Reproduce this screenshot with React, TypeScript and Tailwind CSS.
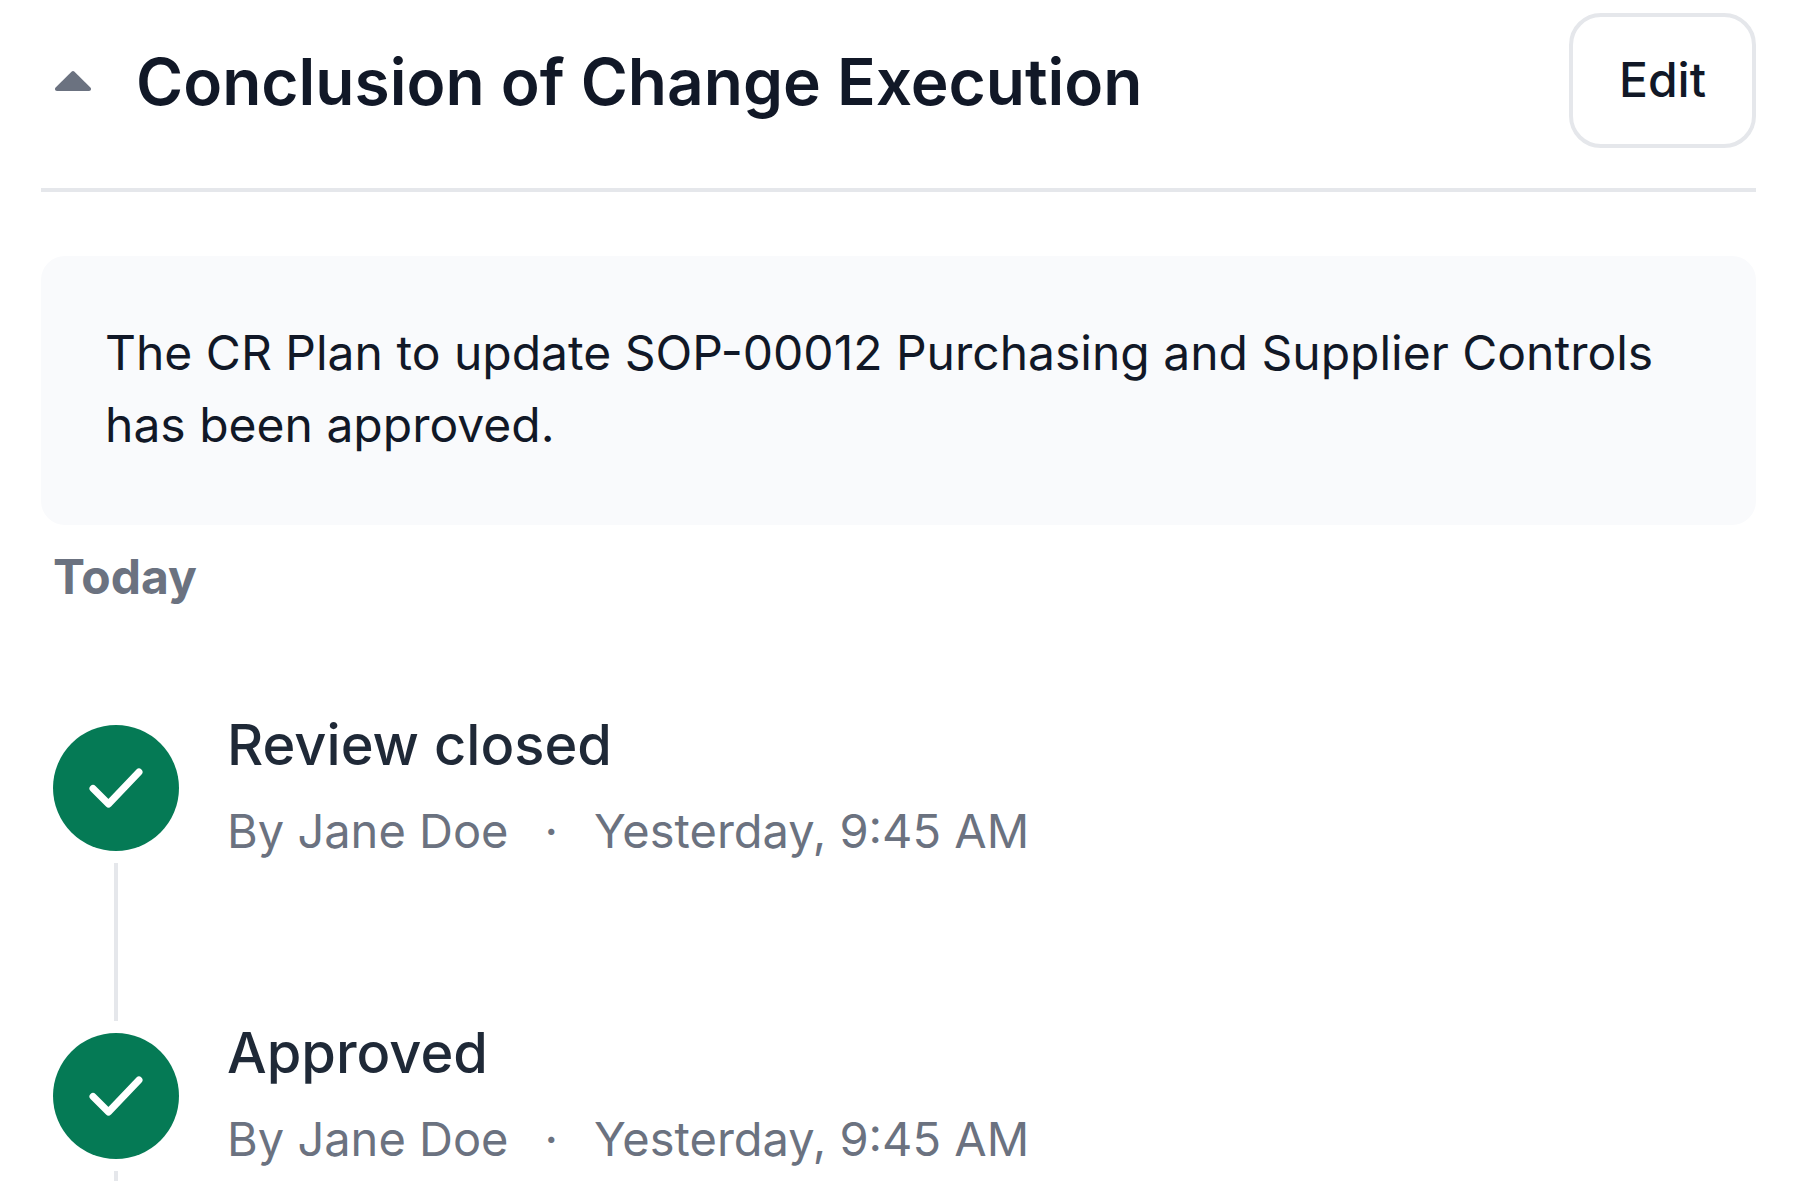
import { useState } from "react";

type TimelineEvent = {
  title: string;
  author: string;
  time: string;
};

const events: TimelineEvent[] = [
  { title: "Review closed", author: "Jane Doe", time: "Yesterday, 9:45 AM" },
  { title: "Approved", author: "Jane Doe", time: "Yesterday, 9:45 AM" },
];

export default function App() {
  const [open, setOpen] = useState(true);

  return (
    <main className="bg-white pt-[13px] pr-11 pl-[41px] font-['Inter',sans-serif] text-[48px]">
      <header className="flex items-center justify-between border-b-4 border-[#e5e7eb] pb-10">
        <div className="flex items-center">
          <button
            type="button"
            aria-label="Toggle section"
            aria-expanded={open}
            onClick={() => setOpen(!open)}
            className="flex w-[95px] pl-3.5"
          >
            <CaretIcon open={open} />
          </button>
          <h1 className="pt-0.5 text-[64px] leading-[80px] font-semibold text-[#111827]">
            Conclusion of Change Execution
          </h1>
        </div>
        <button
          type="button"
          className="rounded-[32px] border-4 border-[#e5e7eb] px-[46px] pt-[31px] pb-8 text-[48px] leading-[64px] font-medium text-[#111827]"
        >
          Edit
        </button>
      </header>

      {open && (
        <>
          <p className="mt-16 rounded-3xl bg-[#f9fafc] px-16 pt-[61px] pb-16 text-[48px] leading-[72px] text-[#111827]">
            The CR Plan to update SOP-00012 Purchasing and Supplier Controls has been approved.
          </p>
          <section>
            <h2 className="mt-4 pl-3 text-[48px] leading-[72px] font-bold text-[#6b7280]">Today</h2>
            <ol className="mt-[104px] pl-3">
              {events.map((event) => (
                <TimelineItem key={event.title} {...event} />
              ))}
            </ol>
          </section>
        </>
      )}
    </main>
  );
}

function TimelineItem({ title, author, time }: TimelineEvent) {
  return (
    <li className="flex h-[308px] gap-12 last:h-[160px]">
      <div className="flex flex-col items-center gap-3 pt-2 pb-1">
        <span className="flex size-[126px] shrink-0 items-center justify-center rounded-full bg-[#057a55]">
          <CheckIcon />
        </span>
        <span className="w-1 grow bg-[#e5e7eb]" />
      </div>
      <div className="-mt-2">
        <h3 className="text-[56px] leading-[72px] font-medium text-[#1f2937]">{title}</h3>
        <p className="flex gap-9 pt-3.5 text-[47px] leading-[72px] text-[#6b7280]">
          <span>By {author}</span>
          <span>·</span>
          <time>{time}</time>
        </p>
      </div>
    </li>
  );
}

function CaretIcon({ open }: { open: boolean }) {
  return (
    <svg width="36" height="20" viewBox="0 0 36 20" fill="#6b7280" aria-hidden="true" className={open ? "" : "rotate-180"}>
      <path d="M16.5.7a2.2 2.2 0 0 1 3 0L35.4 16.500c1.200 1.300.6 3.500-1.400 3.500H2c-2 0-2.600-2.200-1.400-3.500Z" />
    </svg>
  );
}

function CheckIcon() {
  return (
    <svg
      width="56"
      height="42"
      viewBox="0 0 56 42"
      fill="none"
      stroke="white"
      strokeWidth="7"
      strokeLinecap="round"
      strokeLinejoin="round"
      aria-hidden="true"
    >
      <path d="M5 21.5 20.5 37 51 5" />
    </svg>
  );
}
